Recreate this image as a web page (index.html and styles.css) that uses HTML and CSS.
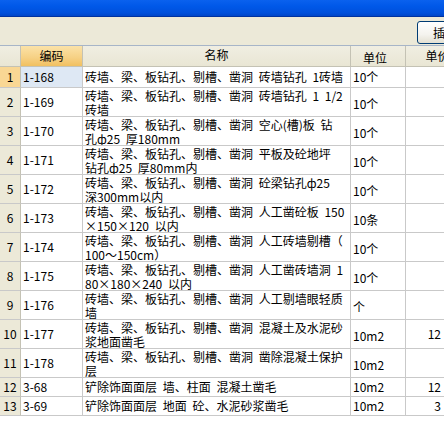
FILE: index.html
```html
<!DOCTYPE html>
<html>
<head>
<meta charset="utf-8">
<link rel="stylesheet" href="styles.css">
</head>
<body>
<div class="titlebar"></div>
<div class="toolbar"><button class="btn">插入</button></div>
<div class="grid">
  <div class="row head">
    <div class="c n"></div>
    <div class="c code hl">编码</div>
    <div class="c name ctr">名称</div>
    <div class="c unit ctr">单位</div>
    <div class="c price ctr">单价</div>
  </div>
  <div class="row r1">
    <div class="c n cur">1</div>
    <div class="c code sel">1-168</div>
    <div class="c name">砖墙、梁、板钻孔、剔槽、凿洞 砖墙钻孔 1砖墙</div>
    <div class="c unit">10个</div>
    <div class="c price"></div>
  </div>
  <div class="row r2">
    <div class="c n">2</div>
    <div class="c code">1-169</div>
    <div class="c name">砖墙、梁、板钻孔、剔槽、凿洞 砖墙钻孔 1 1/2<br>砖墙</div>
    <div class="c unit">10个</div>
    <div class="c price"></div>
  </div>
  <div class="row r2">
    <div class="c n">3</div>
    <div class="c code">1-170</div>
    <div class="c name">砖墙、梁、板钻孔、剔槽、凿洞 空心(槽)板 钻<br>孔ф25 厚180mm</div>
    <div class="c unit">10个</div>
    <div class="c price"></div>
  </div>
  <div class="row r2">
    <div class="c n">4</div>
    <div class="c code">1-171</div>
    <div class="c name">砖墙、梁、板钻孔、剔槽、凿洞 平板及砼地坪<br>钻孔ф25 厚80mm内</div>
    <div class="c unit">10个</div>
    <div class="c price"></div>
  </div>
  <div class="row r2">
    <div class="c n">5</div>
    <div class="c code">1-172</div>
    <div class="c name">砖墙、梁、板钻孔、剔槽、凿洞 砼梁钻孔ф25<br>深300mm以内</div>
    <div class="c unit">10个</div>
    <div class="c price"></div>
  </div>
  <div class="row r2">
    <div class="c n">6</div>
    <div class="c code">1-173</div>
    <div class="c name">砖墙、梁、板钻孔、剔槽、凿洞 人工凿砼板 150<br>×150×120 以内</div>
    <div class="c unit">10条</div>
    <div class="c price"></div>
  </div>
  <div class="row r2">
    <div class="c n">7</div>
    <div class="c code">1-174</div>
    <div class="c name">砖墙、梁、板钻孔、剔槽、凿洞 人工砖墙剔槽（<br>100～150cm）</div>
    <div class="c unit">10个</div>
    <div class="c price"></div>
  </div>
  <div class="row r2">
    <div class="c n">8</div>
    <div class="c code">1-175</div>
    <div class="c name">砖墙、梁、板钻孔、剔槽、凿洞 人工凿砖墙洞 1<br>80×180×240 以内</div>
    <div class="c unit">10个</div>
    <div class="c price"></div>
  </div>
  <div class="row r2">
    <div class="c n">9</div>
    <div class="c code">1-176</div>
    <div class="c name">砖墙、梁、板钻孔、剔槽、凿洞 人工剔墙眼轻质<br>墙</div>
    <div class="c unit">个</div>
    <div class="c price"></div>
  </div>
  <div class="row r2">
    <div class="c n">10</div>
    <div class="c code">1-177</div>
    <div class="c name">砖墙、梁、板钻孔、剔槽、凿洞 混凝土及水泥砂<br>浆地面凿毛</div>
    <div class="c unit">10m2</div>
    <div class="c price">12</div>
  </div>
  <div class="row r2">
    <div class="c n">11</div>
    <div class="c code">1-178</div>
    <div class="c name">砖墙、梁、板钻孔、剔槽、凿洞 凿除混凝土保护<br>层</div>
    <div class="c unit">10m2</div>
    <div class="c price"></div>
  </div>
  <div class="row r3">
    <div class="c n">12</div>
    <div class="c code">3-68</div>
    <div class="c name">铲除饰面面层 墙、柱面 混凝土凿毛</div>
    <div class="c unit">10m2</div>
    <div class="c price">12</div>
  </div>
  <div class="row r3">
    <div class="c n">13</div>
    <div class="c code">3-69</div>
    <div class="c name">铲除饰面面层 地面 砼、水泥砂浆凿毛</div>
    <div class="c unit">10m2</div>
    <div class="c price">3</div>
  </div>
</div>
</body>
</html>
```

FILE: styles.css
```css
html, body {
  margin: 0;
  padding: 0;
  background: #ffffff;
  overflow: hidden;
  width: 444px;
  height: 438px;
}
body {
  font-family: "Noto Sans CJK SC", "Noto Sans", sans-serif;
  font-size: 12px;
  color: #000;
}
.titlebar {
  height: 16px;
  background: linear-gradient(#0a61ee 0%, #0058e8 40%, #0050dc 80%, #0046c8 100%);
  border-bottom: 1px solid #0032a0;
}
.toolbar {
  height: 28px;
  background: #ece9d8;
  border-bottom: 1px solid #a7b5c8;
  display: flex;
  justify-content: flex-end;
  align-items: flex-start;
  overflow: hidden;
}
.btn {
  margin-top: 4px;
  margin-right: -40px;
  width: 67px;
  height: 23px;
  border: 1px solid #003c74;
  border-radius: 3px;
  background: linear-gradient(#ffffff, #f4f3ee 60%, #e3e0d2);
  font-family: "Noto Sans CJK SC", sans-serif;
  font-size: 12px;
  padding: 0 0 0 15px;
  text-align: left;
  color: #000;
}
.grid {
  width: 470px;
}
.row {
  display: grid;
  grid-template-columns: 21px 62px 268px 55px 64px;
}
.c {
  box-sizing: border-box;
  border-right: 1px solid #c9c9c9;
  border-bottom: 1px solid #c9c9c9;
  white-space: nowrap;
  overflow: hidden;
  padding-left: 2px;
  display: flex;
  align-items: center;
  line-height: 14px;
  word-spacing: 3px;
}
.head .c {
  height: 21px;
  background: linear-gradient(#f0eee2, #e9e6d4);
  border-right-color: #c4c2b4;
  border-bottom-color: #c4c2b4;
  justify-content: center;
  padding-left: 0;
  line-height: 16px;
}
.head .c.hl {
  background: linear-gradient(#fbe2a8, #f6d083 60%, #f1c060);
}
.head .unit {
  padding-right: 6px;
}
.head .price {
  padding-right: 0;
}
.n {
  background: #ece9d8;
  justify-content: center;
  padding-left: 0;
  border-right-color: #c4c2b4;
}
.n.cur {
  background: #f9d794;
}
.sel {
  background: #dee8f4;
}
.r1 .c { height: 21px; }
.r2 .c { height: 29px; }
.r3 .c { height: 19px; }
.name {
  align-items: flex-start;
  padding-top: 1px;
}
.r1 .name, .r3 .name {
  align-items: center;
  padding-top: 0;
}
.unit {
  padding-top: 3px;
}
.r1 .unit, .r3 .unit { padding-top: 0; }
.price {
  justify-content: flex-end;
  padding-right: 28px;
}
```
